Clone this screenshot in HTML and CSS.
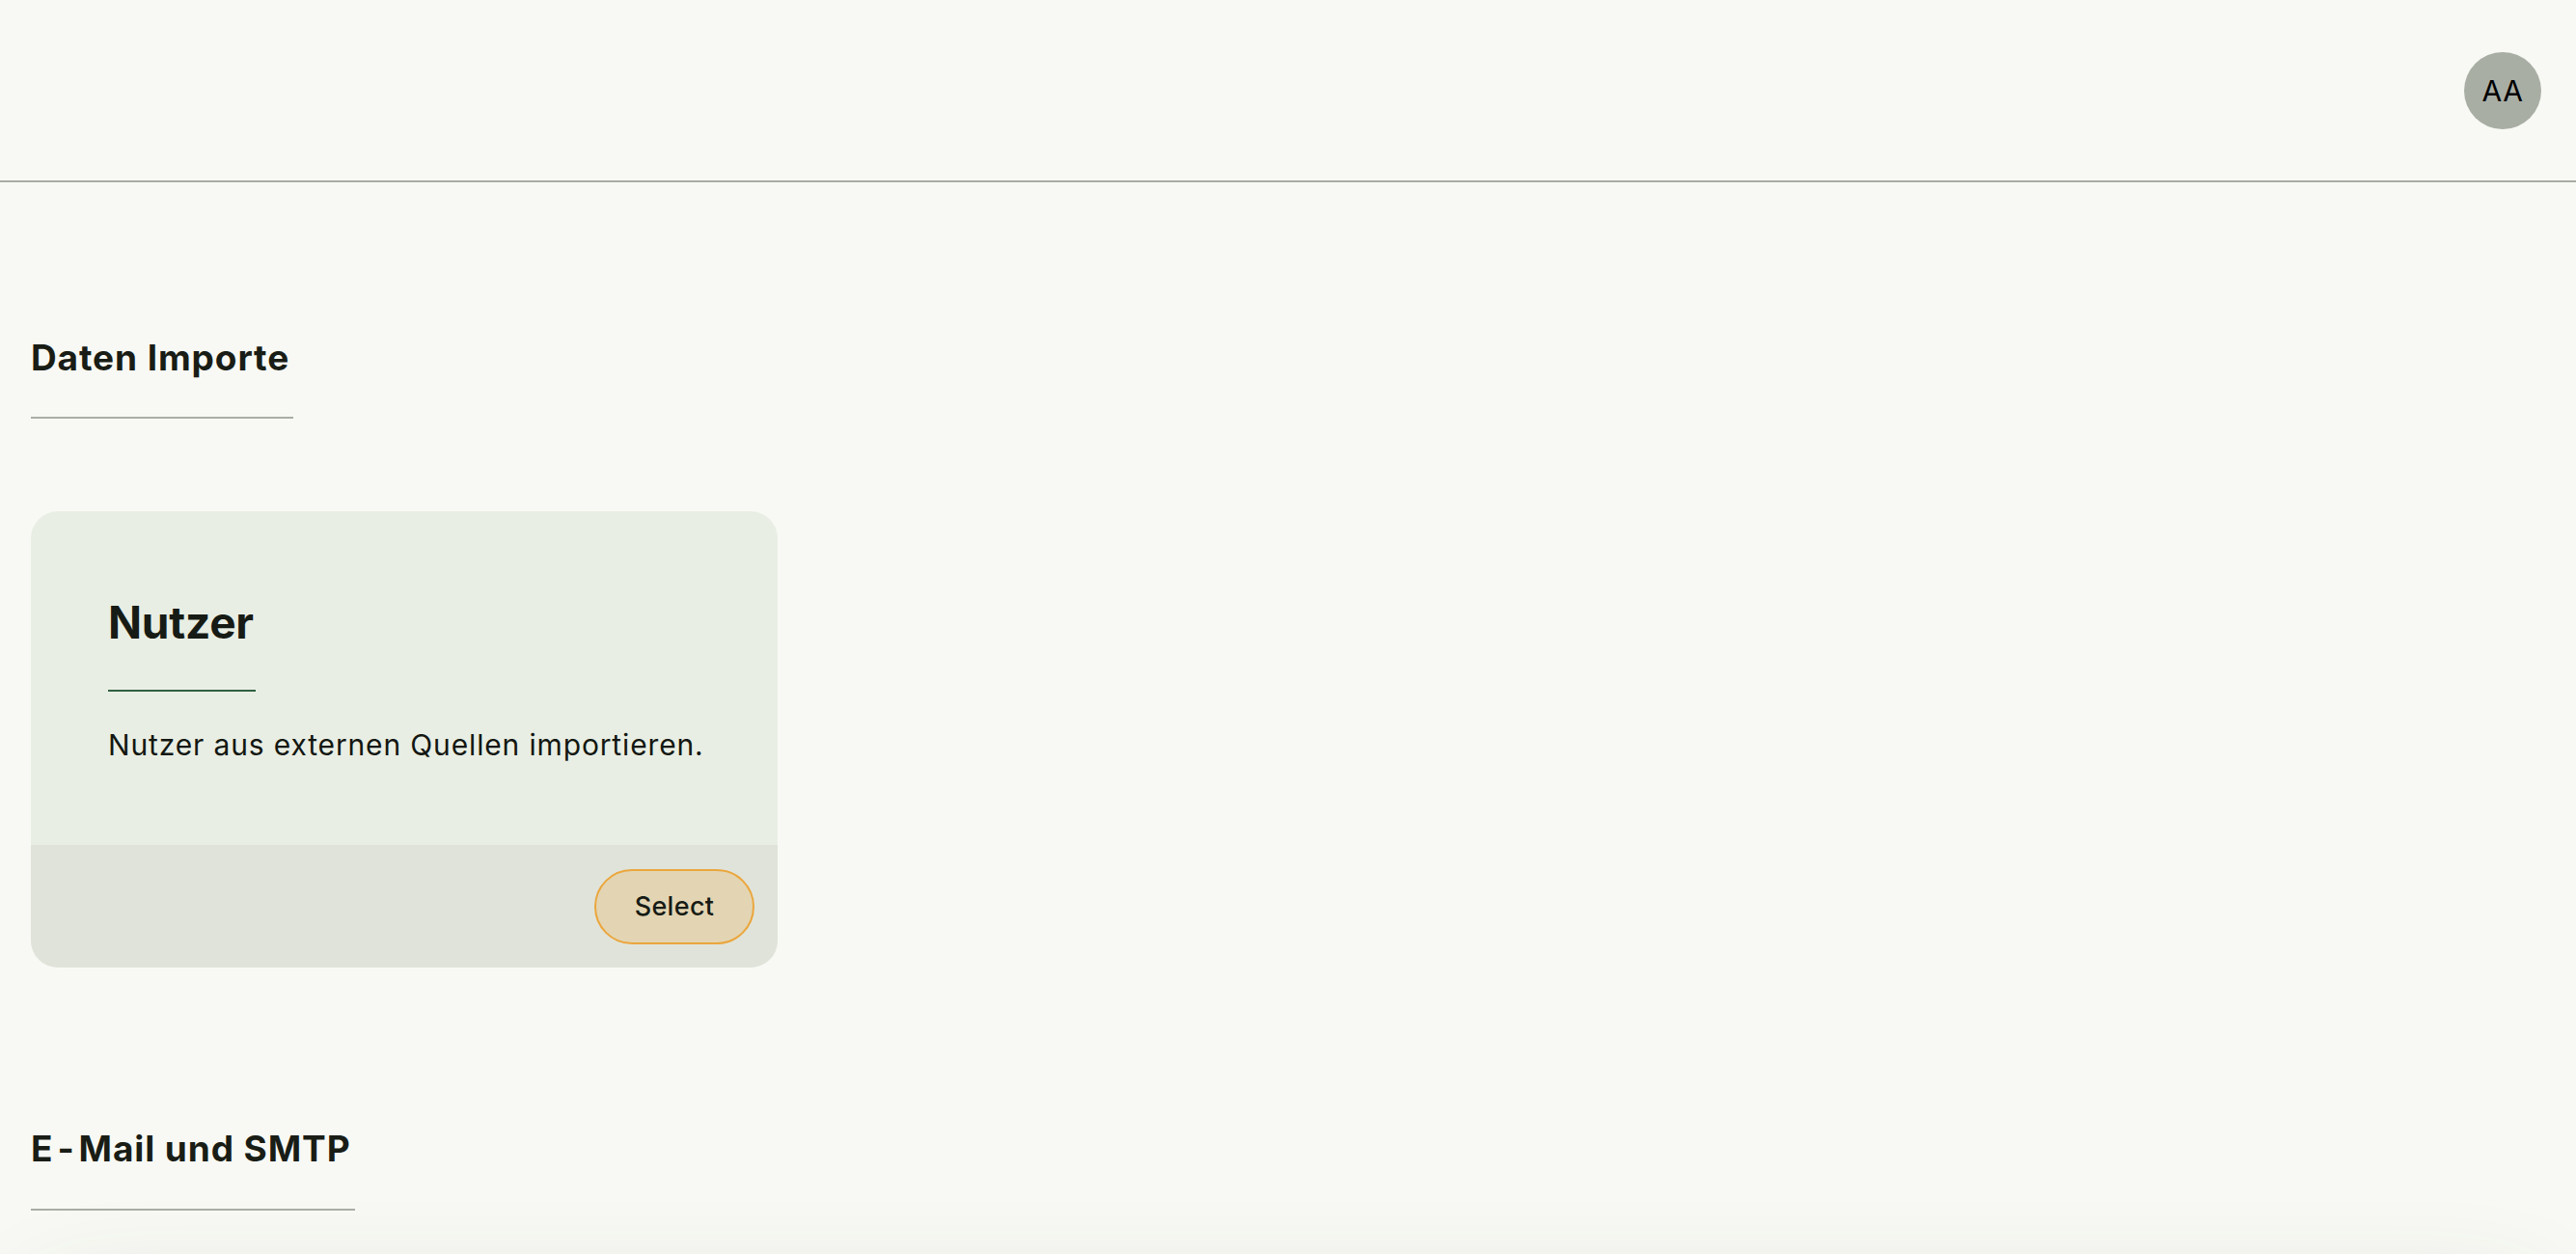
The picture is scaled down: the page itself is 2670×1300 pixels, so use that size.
FILE: index.html
```html
<!DOCTYPE html>
<html lang="de">
<head>
<meta charset="utf-8">
<title>Einstellungen</title>
<link rel="stylesheet" href="styles.css">
</head>
<body>
<header class="topbar">
  <div class="avatar">AA</div>
</header>
<main class="main">
  <section class="section first">
    <h2 class="section-title">Daten Importe</h2>
    <div class="cards">
      <article class="card">
        <div class="card-body">
          <h3 class="card-title">Nutzer</h3>
          <p class="card-text">Nutzer aus externen Quellen importieren.</p>
        </div>
        <div class="card-footer">
          <button class="btn-select">Select</button>
        </div>
      </article>
    </div>
  </section>
  <section class="section second">
    <h2 class="section-title">E<span class="hyphen">-</span>Mail und SMTP</h2>
    <div class="wide-card"></div>
  </section>
</main>
</body>
</html>
```
FILE: styles.css
```css
html, body {
  margin: 0;
  padding: 0;
}
body {
  background: #f8f9f4;
  font-family: Inter, "Noto Sans", sans-serif;
  color: #191d16;
  overflow: hidden;
}
.topbar {
  height: 187px;
  border-bottom: 2px solid #a8ada4;
  display: flex;
  justify-content: flex-end;
  align-items: center;
  padding: 0 36px;
}
.avatar {
  width: 80px;
  height: 80px;
  border-radius: 50%;
  background: #a9aea5;
  color: #000;
  display: flex;
  align-items: center;
  justify-content: center;
  font-size: 30px;
  font-weight: 400;
  letter-spacing: 0.5px;
}
.main {
  padding: 0 32px;
}
.section.first {
  padding-top: 160px;
}
.section.second {
  padding-top: 166px;
}
.section-title {
  display: inline-block;
  margin: 0;
  font-size: 37px;
  font-weight: 700;
  line-height: 1.2;
  letter-spacing: 0.9px;
  padding: 0 4px 39px 0;
  border-bottom: 2px solid #a8ada4;
  color: #191d16;
}
.hyphen {
  padding: 0 4px;
}
.cards {
  margin-top: 96px;
  display: flex;
}
.card {
  width: 774px;
  border-radius: 28px;
  overflow: hidden;
  background: #e9eee4;
  display: flex;
  flex-direction: column;
}
.card-body {
  padding: 88px 80px 81px;
  height: 346px;
  box-sizing: border-box;
}
.card-title {
  display: inline-block;
  margin: 0;
  font-size: 46px;
  font-weight: 700;
  line-height: 1.2;
  padding: 0 2px 41px 0;
  border-bottom: 2px solid #2f6042;
  color: #171b15;
  letter-spacing: -0.2px;
}
.card-text {
  margin: 33px 0 0;
  font-size: 30px;
  line-height: 1.5;
  letter-spacing: 0.85px;
  white-space: nowrap;
  color: #131711;
}
.card-footer {
  background: #e0e3d9;
  height: 127px;
  box-sizing: border-box;
  padding: 0 24px;
  display: flex;
  align-items: center;
  justify-content: flex-end;
}
.btn-select {
  height: 78px;
  width: 166px;
  border-radius: 39px;
  border: 2px solid #eba63c;
  background: #e3d5b3;
  font-family: Inter, "Noto Sans", sans-serif;
  font-size: 27px;
  font-weight: 500;
  letter-spacing: 0.3px;
  color: #171b15;
  padding: 0;
  cursor: pointer;
}
.wide-card {
  margin-top: 96px;
  height: 400px;
  border-radius: 28px;
  background: #f8f9f4;
  box-shadow: 0 0 120px -10px rgba(60, 70, 50, 0.2);
}
```
